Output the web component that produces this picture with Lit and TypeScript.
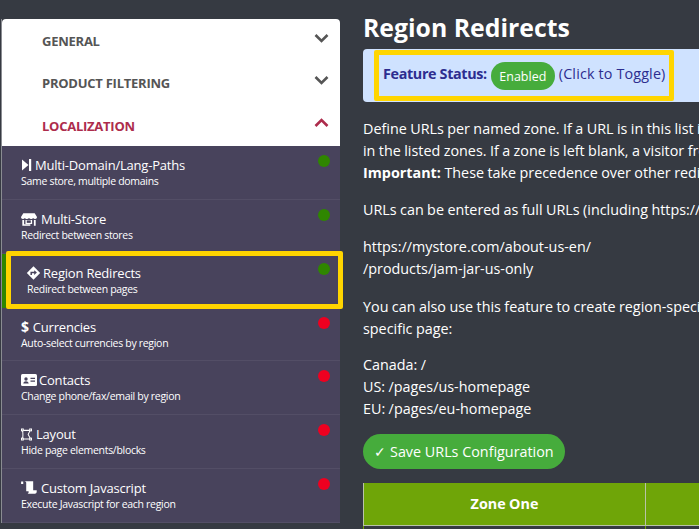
import { LitElement, html, css, svg } from "lit";
import { customElement } from "lit/decorators.js";

const icons: Record<string, unknown> = {
  domain: svg`<svg class="ic i-domain" viewBox="0 0 11 14"><path fill="#fff" d="M1 1.500l6.500 5.500L1 12.500z"/><path fill="#fff" d="M8 1h2.200v12H8z"/></svg>`,
  store: svg`<svg class="ic i-store" viewBox="0 0 18 14"><path fill="#fff" d="M2.600 0h12.800L18 4.300c0 1.400-1 2.200-2.100 2.200-.9 0-1.700-.5-2.300-1.300-.5.8-1.400 1.300-2.300 1.300s-1.700-.5-2.300-1.300c-.6.800-1.400 1.300-2.300 1.300s-1.800-.5-2.300-1.300c-.6.800-1.400 1.300-2.300 1.300C1 6.500 0 5.700 0 4.300z"/><path fill="#fff" d="M1.500 7.500h2V14h-2zM14.500 7.500h2V14h-2zM5 7.500h7.500V12H5zM1.500 12.300h9V14h-9z"/><path fill="#48435c" d="M6.500 8h4.500v2.800H6.500z"/></svg>`,
  diamond: svg`<svg class="ic i-diamond" viewBox="0 0 14 14"><path fill="#fff" d="M7 .3l6.700 6.700L7 13.700.3 7z"/><path fill="none" stroke="#48435c" stroke-width="1.500" d="M4.700 9V6.600h4"/><path fill="#48435c" d="M7.700 4.300L10.400 6.600 7.700 8.900z"/></svg>`,
  card: svg`<svg class="ic i-card" viewBox="0 0 16 12"><rect width="16" height="12" rx="1.500" fill="#fff"/><circle cx="5" cy="5" r="1.700" fill="#48435c"/><path fill="#48435c" d="M2.300 9.500c.3-3 5-3 5.400 0zM9.500 3.800h4.500v1.300H9.500zM9.500 6.500h4.500v1.300H9.500z"/></svg>`,
  layout: svg`<svg class="ic i-layout" viewBox="0 0 12 13" fill="none" stroke="#fff" stroke-width="1.100"><path d="M1.500 2h8.500L7.800 6.500l2.700 5H1.500c.8-1.600.8-7.500 0-9.500z"/><rect x=".5" y=".5" width="2" height="2" fill="#48435c"/><rect x=".5" y="10.500" width="2" height="2" fill="#48435c"/><rect x="9.500" y=".5" width="2" height="2" fill="#48435c"/><rect x="9.500" y="10.500" width="2" height="2" fill="#48435c"/></svg>`,
  scroll: svg`<svg class="ic i-scroll" viewBox="0 0 17 14"><path fill="#fff" d="M0 .5h2.300v2.800H0zM3.500 .2h9.500v9.800h3.800v1.700c0 1.200-.9 2.100-2 2.100H7c1-.6 1.300-1.600 1-2.800H5.500V2c0-1-.8-1.800-2-1.800z"/></svg>`,
};

const items = [
  { icon: "domain", t: "Multi-Domain/Lang-Paths", s: "Same store, multiple domains", on: true },
  { icon: "store", t: "Multi-Store", s: "Redirect between stores", on: true },
  { icon: "diamond", t: "Region Redirects", s: "Redirect between pages", on: true, active: true },
  { icon: "", t: "Currencies", s: "Auto-select currencies by region", on: false },
  { icon: "card", t: "Contacts", s: "Change phone/fax/email by region", on: false },
  { icon: "layout", t: "Layout", s: "Hide page elements/blocks", on: false },
  { icon: "scroll", t: "Custom Javascript", s: "Execute Javascript for each region", on: false },
];

@customElement("app-root")
export class AppRoot extends LitElement {
  static styles = css`
    :host {
      display: flex;
      width: 699px;
      height: 529px;
      overflow: hidden;
      background: #363a42;
      font-family: "Open Sans", "Noto Sans", sans-serif;
      color: #fff;
    }
    .side {
      flex: none;
      width: 338px;
      margin: 19px 0 0 2px;
      align-self: flex-start;
      box-shadow: -1px 0 0 #8a8c92;
    }
    .head {
      height: 41px;
      padding: 2px 11px 0 40px;
      box-sizing: content-box;
      margin-top: -2px;
      display: flex;
      align-items: center;
      justify-content: space-between;
      background: #fff;
      border-bottom: 1px solid #ccc;
      font-size: 13px;
      letter-spacing: -0.25px;
      font-weight: 700;
      color: #555;
    }
    .head:first-child { border-radius: 4px 4px 0 0; height: 40px; padding-top: 2px; margin-top: 0; }
    .head.open { color: #ad2c4c; border-bottom: none; height: 40.400px; padding-top: 4px; }
    .chev { width: 15px; height: 15px; margin-top: -7px; }
    .item {
      height: 53.750px;
      box-sizing: border-box;
      padding: 10px 10px 0 19px;
      background: #48435c;
      border-bottom: 1px solid #534e66;
      display: flex;
      justify-content: space-between;
      align-items: flex-start;
    }
    .item.active {
      position: relative;
      padding-left: 25px;
      border-bottom: none;
      box-shadow: inset 4px 0 0 #2f8600;
    }
    .item.active::after {
      content: "";
      position: absolute;
      left: 4px;
      right: -3px;
      top: -3px;
      bottom: -1px;
      border: 5px solid #ffd500;
      border-radius: 2px;
    }
    .title {
      display: flex;
      align-items: center;
      gap: 4px;
      font-size: 13px;
      letter-spacing: -0.2px;
      line-height: 18px;
    }
    .ic { height: 14px; flex: none; }
    .i-domain { width: 11px; margin-right: -1px; }
    .i-store { width: 16px; height: 13px; }
    .i-diamond { width: 15px; margin: 0 -2px 0 -1px; }
    .i-card { width: 16px; height: 12px; margin-right: -2px; }
    .i-layout { width: 11px; height: 13px; }
    .i-scroll { width: 16px; height: 13px; }
    .dollar { font-weight: 700; font-size: 14px; }
    .sub { font-size: 10.500px; letter-spacing: -0.3px; line-height: 15px; }
    .dot {
      width: 12px;
      height: 12px;
      border-radius: 50%;
      flex: none;
      margin-top: -1px;
    }
    .dot.on { background: #2f8600; }
    .dot.off { background: #ee0020; }

    .main {
      flex: none;
      width: 400px;
      box-sizing: border-box;
      margin-left: 23px;
      font-size: 14.350px;
      word-spacing: -0.3px;
      line-height: 22.100px;
      white-space: nowrap;
    }
    h2 {
      margin: 10px 0 0;
      font-size: 24.800px;
      word-spacing: 0;
      line-height: 34px;
      font-weight: 700;
    }
    .alert {
      margin-top: 5px;
      height: 53px;
      box-sizing: border-box;
      background: #cfe2ff;
      border-radius: 4px 0 0 4px;
      padding: 1px 0 0 11px;
      display: flex;
      color: #2d2d8f;
      word-spacing: 0;
    }
    .outline {
      width: 300px;
      height: 51px;
      box-sizing: border-box;
      border: 5px solid #ffd500;
      border-radius: 2px;
      padding: 0 0 2px 4px;
      display: flex;
      align-items: center;
      gap: 4px;
    }
    .outline b { font-weight: 700; letter-spacing: -0.350px; }
    .toggle { letter-spacing: 0.150px; }
    .pill {
      background: #46ac3c;
      color: #fff;
      font-size: 12.500px;
      border-radius: 14px;
      height: 28px;
      width: 64px;
      display: flex;
      align-items: center;
      justify-content: center;
      padding-top: 3px;
      box-sizing: border-box;
      margin-top: 2px;
    }
    p { margin: 15px 0 0; }
    .alert + p { margin-top: 16px; }
    p.zonesample { margin-top: 14px; }
    .btn {
      margin-top: 14px;
      width: 202px;
      height: 35px;
      padding-top: 1px;
      box-sizing: border-box;
      border-radius: 18px;
      background: #46ac3c;
      display: flex;
      align-items: center;
      justify-content: center;
      word-spacing: 0;
    }
    .zones {
      margin-top: 14px;
      display: grid;
      grid-template-columns: 282px 1fr;
      height: 42px;
      background: #6fa508;
      border: 1px solid #b9c3a8;
      border-width: 0 0 1px 1px;
      font-weight: 700;
    }
    .zones div {
      display: flex;
      align-items: center;
      justify-content: center;
      border-right: 1px solid #b9c3a8;
    }
    .under {
      height: 5px;
      display: grid;
      grid-template-columns: 282px 1fr;
      border-left: 1px solid #6fa508;
    }
    .under i { border-right: 1px solid #6fa508; }
  `;

  chev(up: boolean, color: string) {
    return svg`<svg class="chev" viewBox="0 0 15 15"><path fill="none" stroke="${color}" stroke-width="2.600" d="${up ? "M1.500 11L7.500 5l6 6" : "M1.500 5l6 6 6-6"}"/></svg>`;
  }

  render() {
    return html`
      <div class="side">
        <div class="head">GENERAL ${this.chev(false, "#555")}</div>
        <div class="head">PRODUCT FILTERING ${this.chev(false, "#555")}</div>
        <div class="head open">LOCALIZATION ${this.chev(true, "#ad2c4c")}</div>
        ${items.map(
          (i) => html`
            <div class="item ${i.active ? "active" : ""}">
              <div>
                <div class="title">
                  ${i.icon ? icons[i.icon] : html`<span class="dollar">$</span>`}
                  <span>${i.t}</span>
                </div>
                <div class="sub">${i.s}</div>
              </div>
              <span class="dot ${i.on ? "on" : "off"}"></span>
            </div>
          `
        )}
      </div>
      <div class="main">
        <h2>Region Redirects</h2>
        <div class="alert">
          <div class="outline">
            <b>Feature Status:</b>
            <span class="pill">Enabled</span>
            <span class="toggle">(Click to Toggle)</span>
          </div>
        </div>
        <p>
          Define URLs per named zone. If a URL is in this list it will only show<br />
          in the listed zones. If a zone is left blank, a visitor from any zone<br />
          <b>Important:</b> These take precedence over other redirects.
        </p>
        <p>URLs can be entered as full URLs (including https://) or as paths:</p>
        <p>https://mystore.com/about-us-en/<br />/products/jam-jar-us-only</p>
        <p>You can also use this feature to create region-specific pages for a<br />specific page:</p>
        <p class="zonesample">Canada: /<br />US: /pages/us-homepage<br />EU: /pages/eu-homepage</p>
        <div class="btn">✓ Save URLs Configuration</div>
        <div class="zones"><div>Zone One</div><div></div></div>
        <div class="under"><i></i><i></i></div>
      </div>
    `;
  }
}
